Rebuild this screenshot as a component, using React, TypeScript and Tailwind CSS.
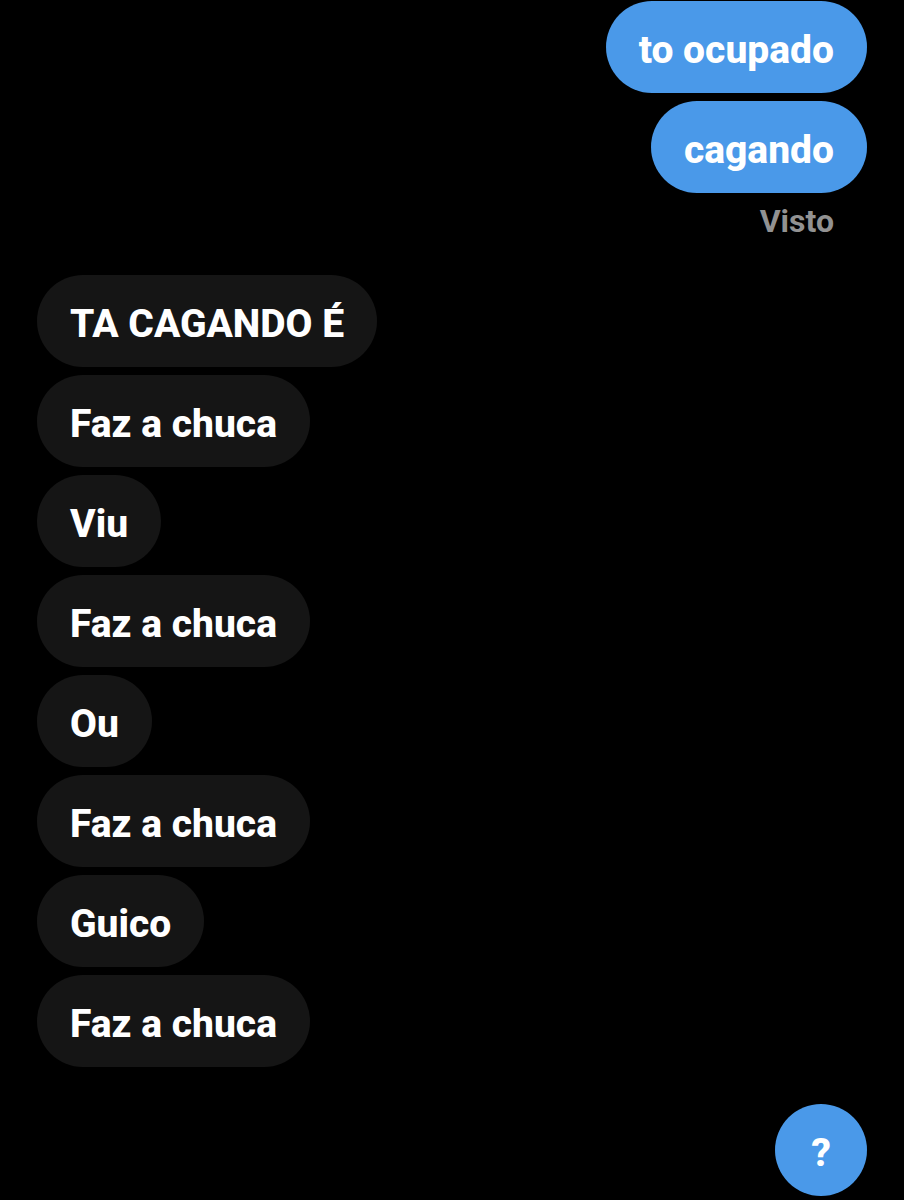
type Message = {
  id: number;
  text: string;
};

const sent: Message[] = [
  { id: 1, text: 'to ocupado' },
  { id: 2, text: 'cagando' },
];

const received: Message[] = [
  { id: 3, text: 'TA CAGANDO É' },
  { id: 4, text: 'Faz a chuca' },
  { id: 5, text: 'Viu' },
  { id: 6, text: 'Faz a chuca' },
  { id: 7, text: 'Ou' },
  { id: 8, text: 'Faz a chuca' },
  { id: 9, text: 'Guico' },
  { id: 10, text: 'Faz a chuca' },
];

function Bubble({ text, mine = false }: { text: string; mine?: boolean }) {
  return (
    <li
      className={
        mine
          ? 'min-w-[92px] px-[33px] pt-[25px] pb-[19px] rounded-[46px] bg-[#4a99e9] text-center'
          : 'px-[33px] pt-[25px] pb-[19px] rounded-[46px] bg-[#151515]'
      }
    >
      <p className="text-[39px] leading-[48px] font-extrabold text-white">{text}</p>
    </li>
  );
}

export default function App() {
  return (
    <main className="min-h-screen bg-black px-[37px] pt-px pb-1 font-[Roboto,sans-serif]">
      <ul className="flex flex-col items-end gap-2">
        {sent.map((m) => (
          <Bubble key={m.id} text={m.text} mine />
        ))}
      </ul>
      <p className="mt-2 pr-[33px] text-right text-[32px] leading-[40px] font-bold text-[#929292]">
        Visto
      </p>

      <ul className="mt-[34px] flex flex-col items-start gap-2">
        {received.map((m) => (
          <Bubble key={m.id} text={m.text} />
        ))}
      </ul>

      <ul className="mt-[37px] flex flex-col items-end">
        <Bubble text="?" mine />
      </ul>
    </main>
  );
}
